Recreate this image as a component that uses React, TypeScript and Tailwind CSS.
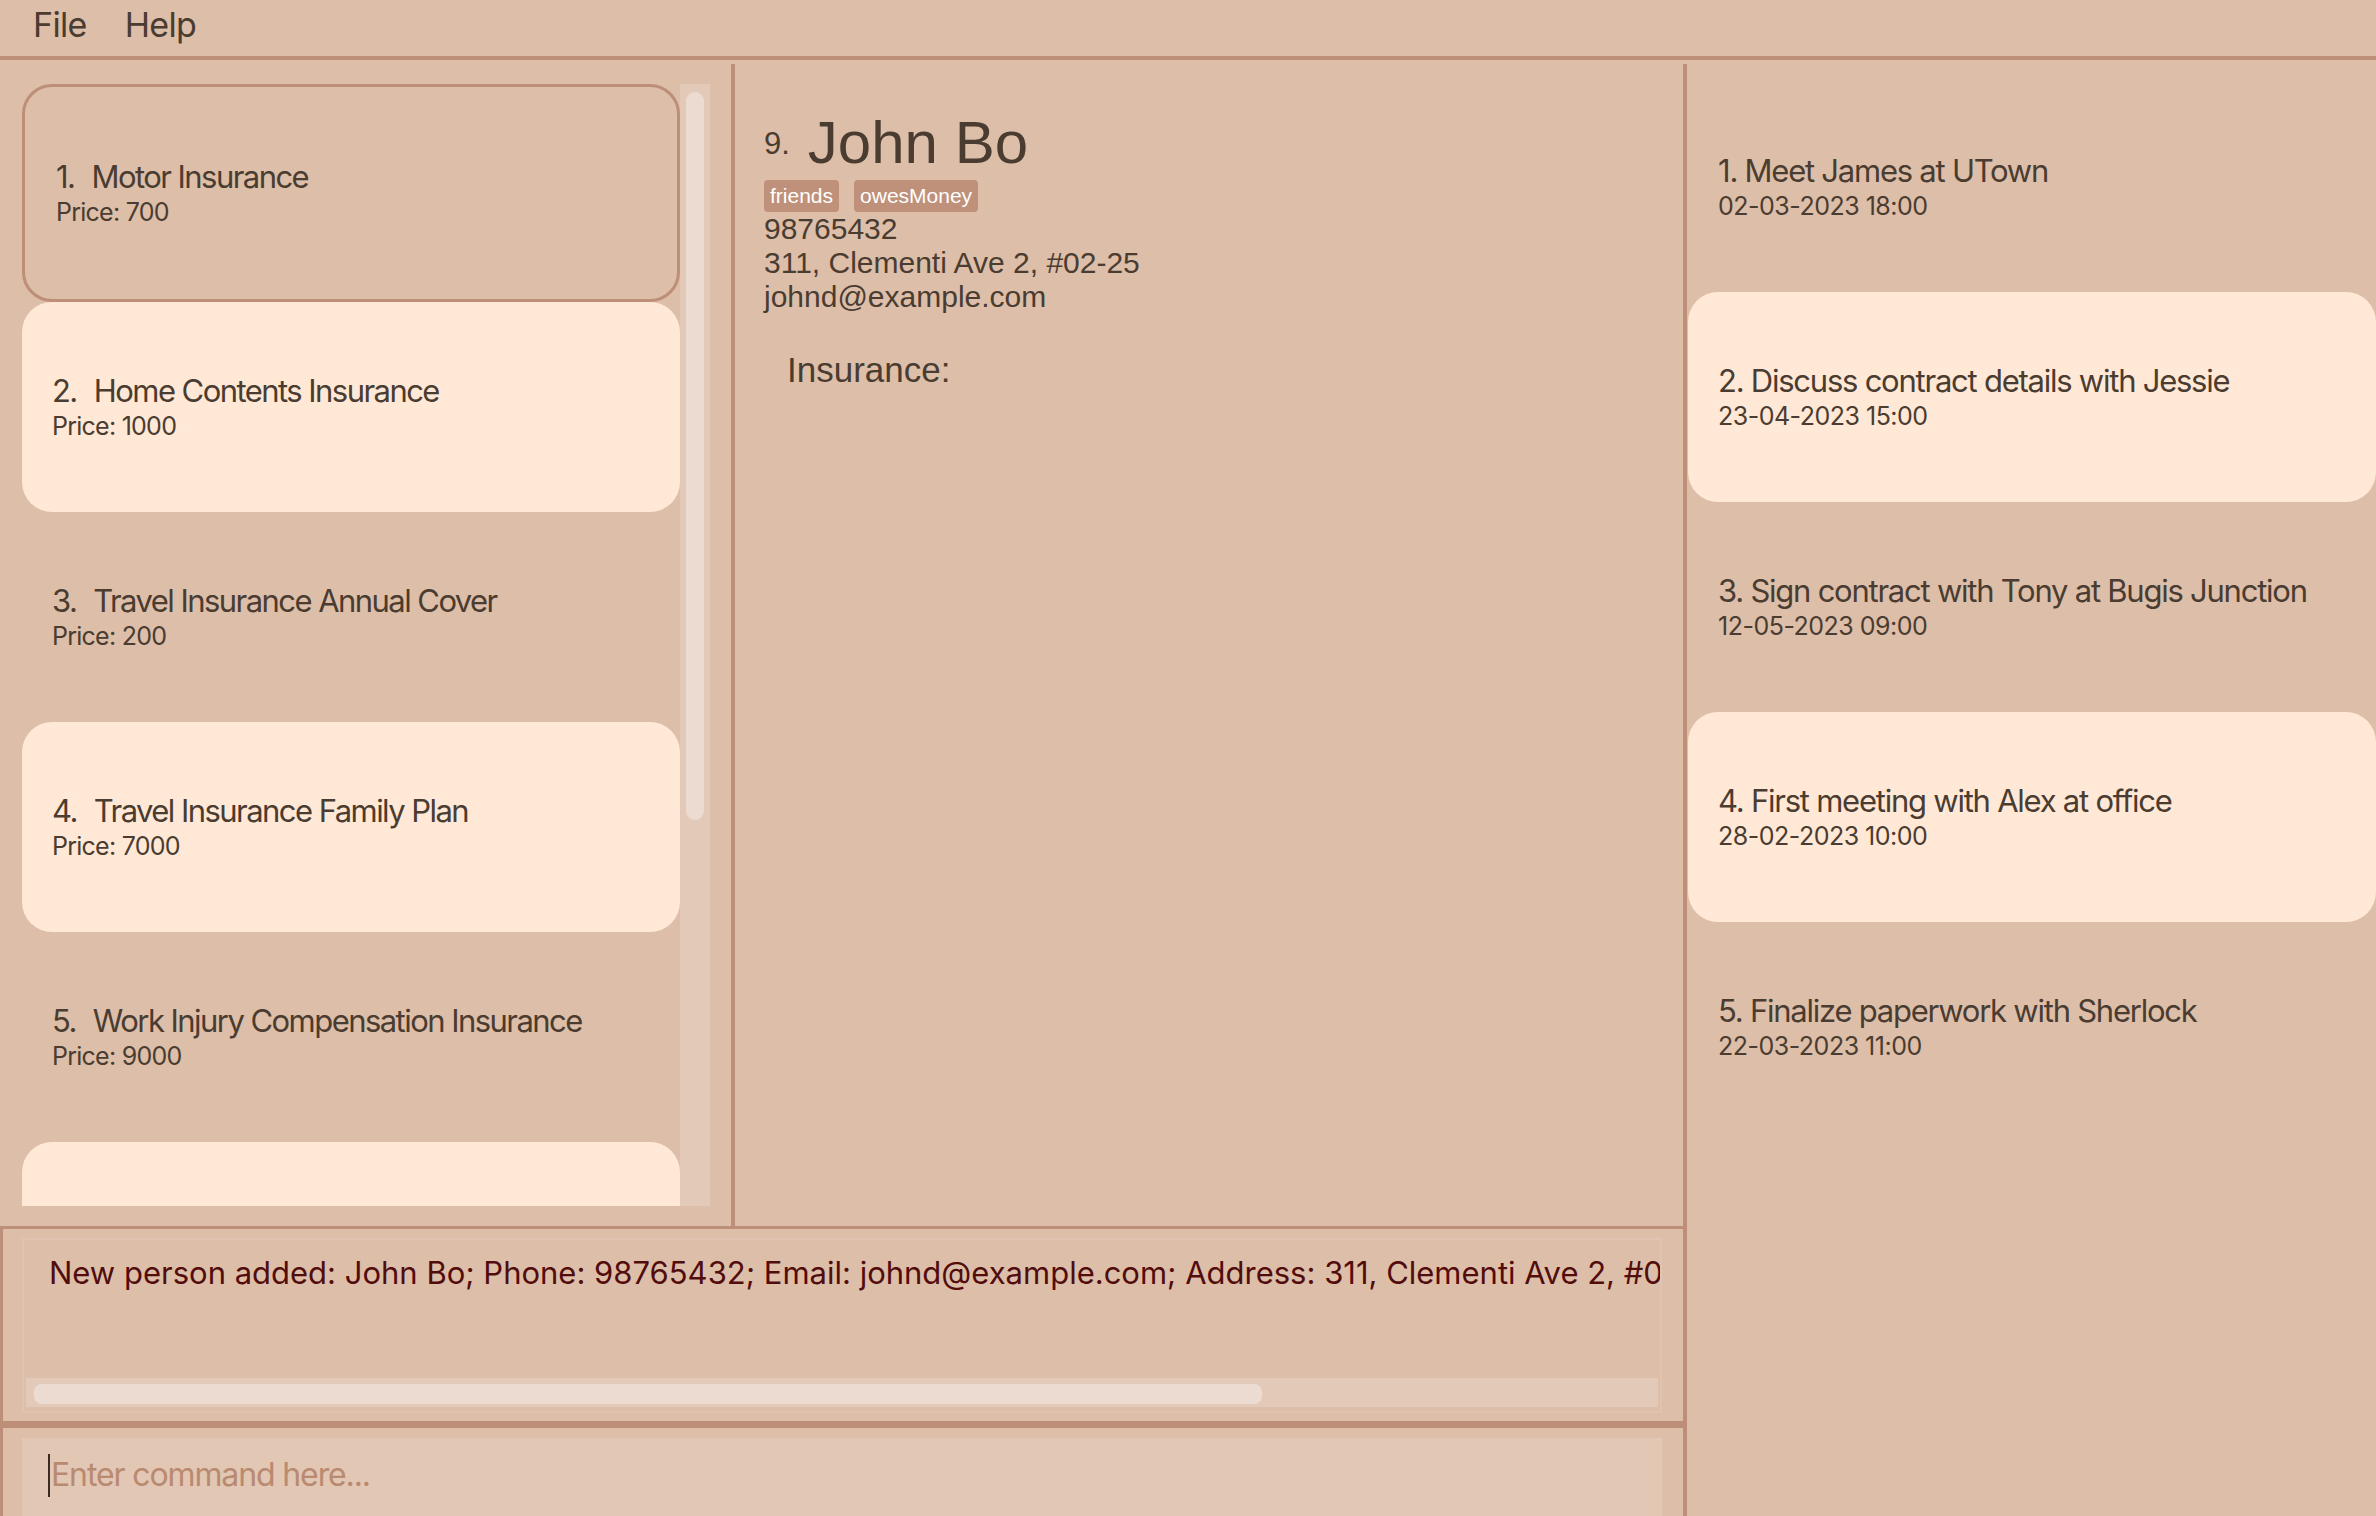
import React from "react";

const insurances = [
  { name: "Motor Insurance", price: "700" },
  { name: "Home Contents Insurance", price: "1000" },
  { name: "Travel Insurance Annual Cover", price: "200" },
  { name: "Travel Insurance Family Plan", price: "7000" },
  { name: "Work Injury Compensation Insurance", price: "9000" },
];

const events = [
  { title: "Meet James at UTown", when: "02-03-2023 18:00" },
  { title: "Discuss contract details with Jessie", when: "23-04-2023 15:00" },
  { title: "Sign contract with Tony at Bugis Junction", when: "12-05-2023 09:00" },
  { title: "First meeting with Alex at office", when: "28-02-2023 10:00" },
  { title: "Finalize paperwork with Sherlock", when: "22-03-2023 11:00" },
];

function InsuranceCard({ index, name, price }: { index: number; name: string; price: string }) {
  const selected = index === 0;
  const light = index % 2 === 1;
  return (
    <div
      className={
        "shrink-0 rounded-[30px] flex flex-col justify-center " +
        (selected
          ? "h-[218px] border-[3px] border-[#be8f78] pl-[31px]"
          : light
            ? "h-[210px] bg-[#ffe8d6] pl-[30px]"
            : "h-[210px] pl-[30px]")
      }
    >
      <div className="flex text-[31px] leading-[38px] tracking-[-0.05em]">
        <span>{index + 1}.</span>
        <span className="ml-[17px]">{name}</span>
      </div>
      <div className="text-[25px] leading-[32px] tracking-[-0.03em]">Price: {price}</div>
    </div>
  );
}

function EventCard({ index, title, when }: { index: number; title: string; when: string }) {
  const light = index % 2 === 1;
  return (
    <div
      className={
        "h-[210px] shrink-0 ml-px rounded-[30px] flex flex-col justify-center pl-[30px] " +
        (light ? "bg-[#ffe8d6]" : "")
      }
    >
      <div className="text-[31px] leading-[38px] tracking-[-0.04em]">
        {index + 1}. {title}
      </div>
      <div className="text-[25px] leading-[32px] tracking-[-0.02em]">{when}</div>
    </div>
  );
}

export default function App(): React.JSX.Element {
  return (
    <div className="w-[2376px] h-[1516px] bg-[#ddbea9] text-[#4a3c30] font-['Inter',sans-serif] flex flex-col overflow-hidden">
      <div className="h-[60px] shrink-0 border-b-4 border-[#be8f78] flex items-center gap-[38px] pl-[33px] pb-[8px] text-[34px] tracking-[-0.02em]">
        <span>File</span>
        <span>Help</span>
      </div>

      <div className="flex flex-1 min-h-0 pt-1">
        <div className="w-[1683px] flex flex-col">
          <div className="h-[1162px] shrink-0 flex">
            <div className="w-[731px] pt-[20px] pb-[20px] pl-[22px] pr-[21px] flex">
              <div className="flex-1 flex flex-col overflow-hidden">
                {insurances.map((ins, i) => (
                  <InsuranceCard key={i} index={i} name={ins.name} price={ins.price} />
                ))}
                {/* next card, scrolled out of view */}
                <div className="h-[210px] shrink-0 rounded-[30px] bg-[#ffe8d6]" />
              </div>
              <div className="w-[30px] bg-[#e3c9b8] pt-[8px] px-[6px]">
                <div className="h-[728px] rounded-[10px] bg-[#ecdbd0]" />
              </div>
            </div>
            <div className="w-[4px] bg-[#be8f78]" />
            <div className="flex-1 pl-[29px] pt-[45px] font-['Liberation_Sans',Arial,sans-serif]">
              <div className="flex items-center h-[68px]">
                <span className="text-[31px] leading-none">9.</span>
                <span className="ml-[18px] text-[60px] leading-[68px]">John Bo</span>
              </div>
              <div className="flex gap-[15px] mt-[3px]">
                <span className="h-[32px] px-[6px] rounded-[4px] bg-[#c0917a] text-white text-[21px] leading-[32px]">
                  friends
                </span>
                <span className="h-[32px] px-[6px] rounded-[4px] bg-[#c0917a] text-white text-[21px] leading-[32px]">
                  owesMoney
                </span>
              </div>
              <div className="text-[30px] leading-[34px]">
                <div>98765432</div>
                <div>311, Clementi Ave 2, #02-25</div>
                <div>johnd@example.com</div>
              </div>
              <div className="mt-[36px] pl-[23px] text-[35px] leading-[40px]">Insurance:</div>
            </div>
          </div>

          <div className="h-[198px] shrink-0 border-[3px] border-r-0 border-[#be8f78] pt-[9px] pb-[8px] pl-[19px] pr-[21px]">
            <div className="h-full border-2 border-[#e0c3b0] flex flex-col">
              <div className="flex-1 overflow-hidden whitespace-nowrap pl-[25px] pt-[15px] text-[31px] leading-[36px] tracking-[0em] text-[#520c0c]">
                New person added: John Bo; Phone: 98765432; Email: johnd@example.com; Address: 311, Clementi Ave 2, #02-25; Tags: [friends][owesMoney]
              </div>
              <div className="h-[29px] mx-[2px] mb-[4px] bg-[#e3c9b8] pt-[6px] pl-[8px]">
                <div className="w-[1228px] h-[20px] rounded-[8px] bg-[#ecdbd0]" />
              </div>
            </div>
          </div>

          <div className="flex-1 border-l-[3px] border-t-[4px] border-[#be8f78] pt-[10px] pl-[19px] pr-[21px]">
            <div className="h-[80px] bg-[#e2c7b5] flex items-center pl-[26px] pb-[6px]">
              <div className="w-[2px] h-[43px] bg-[#3a2a20]" />
              <span className="ml-px text-[32px] tracking-[-0.035em] text-[#b98a70]">Enter command here...</span>
            </div>
          </div>
        </div>

        <div className="w-[4px] bg-[#be8f78]" />

        <div className="flex-1 pt-[18px] flex flex-col overflow-hidden">
          {events.map((ev, i) => (
            <EventCard key={i} index={i} title={ev.title} when={ev.when} />
          ))}
        </div>
      </div>
    </div>
  );
}
